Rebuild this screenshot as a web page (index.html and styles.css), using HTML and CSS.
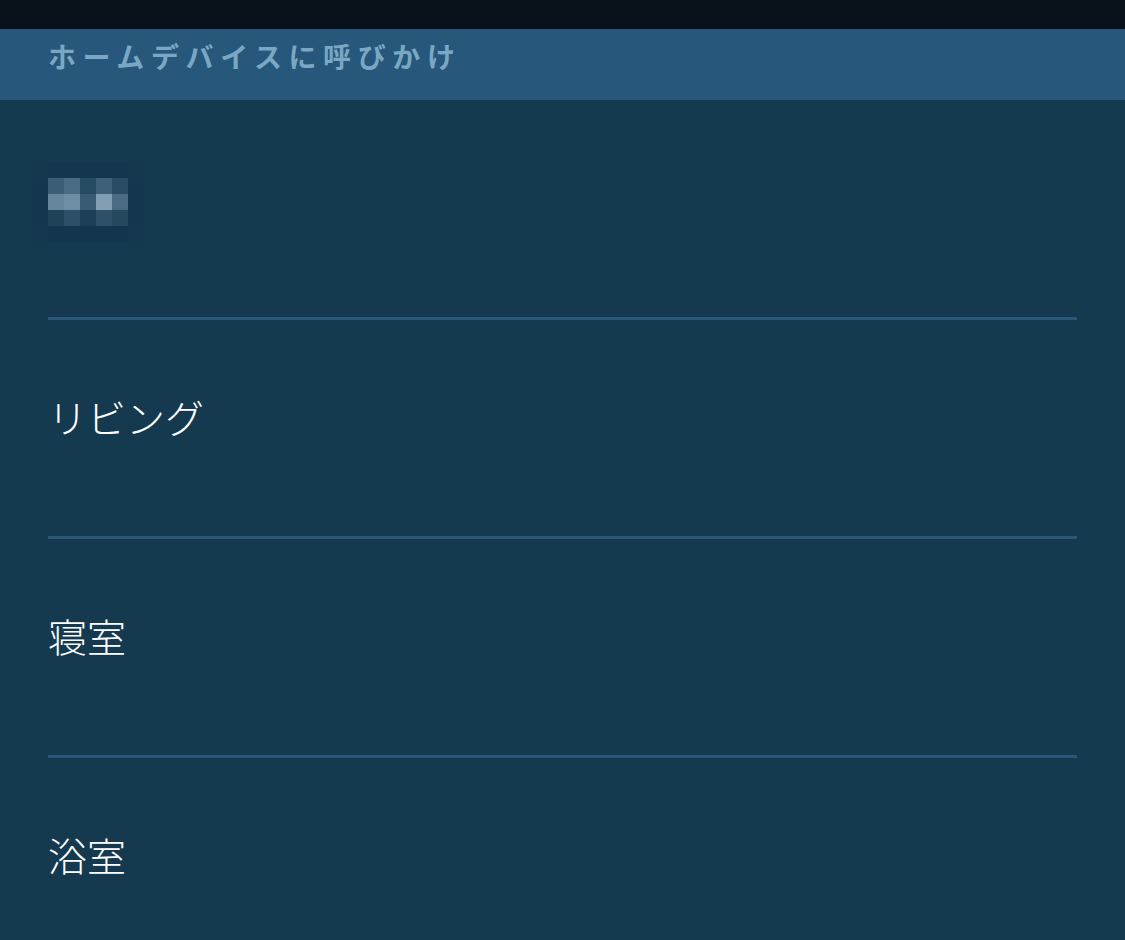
FILE: index.html
```html
<!DOCTYPE html>
<html lang="ja">
<head>
  <meta charset="UTF-8">
  <title>ホームデバイスに呼びかけ</title>
  <link rel="stylesheet" href="styles.css">
</head>
<body>
  <div class="statusbar"></div>

  <div class="header">
    <h1>ホームデバイスに呼びかけ</h1>
  </div>

  <ul class="rooms">
    <li class="room">
      <svg class="avatar" width="112" height="80" viewBox="0 0 112 80">
        <rect x="0" y="0" width="112" height="80" fill="#15384f"/>
        <rect x="16" y="0" width="80" height="16" fill="#143650"/>
        <rect x="0" y="16" width="16" height="48" fill="#14374f"/>
        <rect x="96" y="16" width="16" height="48" fill="#14374f"/>
        <rect x="16" y="64" width="80" height="16" fill="#13354d"/>
        <!-- row 1 -->
        <rect x="16" y="16" width="16" height="16" fill="#3b5d75"/>
        <rect x="32" y="16" width="16" height="16" fill="#4a6c83"/>
        <rect x="48" y="16" width="16" height="16" fill="#284b64"/>
        <rect x="64" y="16" width="16" height="16" fill="#3e6078"/>
        <rect x="80" y="16" width="16" height="16" fill="#2a4c65"/>
        <!-- row 2 -->
        <rect x="16" y="32" width="16" height="16" fill="#66869c"/>
        <rect x="32" y="32" width="16" height="16" fill="#6e8ea4"/>
        <rect x="48" y="32" width="16" height="16" fill="#395b73"/>
        <rect x="64" y="32" width="16" height="16" fill="#829fb2"/>
        <rect x="80" y="32" width="16" height="16" fill="#4b6b82"/>
        <!-- row 3 -->
        <rect x="16" y="48" width="16" height="16" fill="#1f4259"/>
        <rect x="32" y="48" width="16" height="16" fill="#2d5068"/>
        <rect x="48" y="48" width="16" height="16" fill="#1c3f57"/>
        <rect x="64" y="48" width="16" height="16" fill="#2e5169"/>
        <rect x="80" y="48" width="16" height="16" fill="#26485f"/>
      </svg>
    </li>
    <li class="room"><span class="room-name">リビング</span></li>
    <li class="room"><span class="room-name">寝室</span></li>
    <li class="room"><span class="room-name">浴室</span></li>
  </ul>
</body>
</html>
```

FILE: styles.css
```css
* {
  margin: 0;
  padding: 0;
  box-sizing: border-box;
}

body {
  font-family: "Noto Sans CJK JP", "Noto Sans", sans-serif;
  background: #15394f;
  color: #fff;
  overflow: hidden;
}

.statusbar {
  height: 29px;
  background: #07111a;
}

.header {
  height: 71px;
  padding: 6px 48px 0;
  background: #27577a;
}

.header h1 {
  font-size: 28px;
  line-height: 42px;
  font-weight: 700;
  letter-spacing: 6.6px;
  color: #7aa7c3;
}

.rooms {
  list-style: none;
  margin: 0 48px;
  padding-top: 1px;
}

.room {
  height: 219px;
  display: flex;
  align-items: center;
  padding-bottom: 14px;
  border-bottom: 3px solid #2a5677;
}

.avatar {
  display: block;
  margin-left: -16px;
}

.room-name {
  font-size: 39px;
  font-weight: 300;
  line-height: 1.4;
  padding-bottom: 10px;
  color: #fff;
}
```
